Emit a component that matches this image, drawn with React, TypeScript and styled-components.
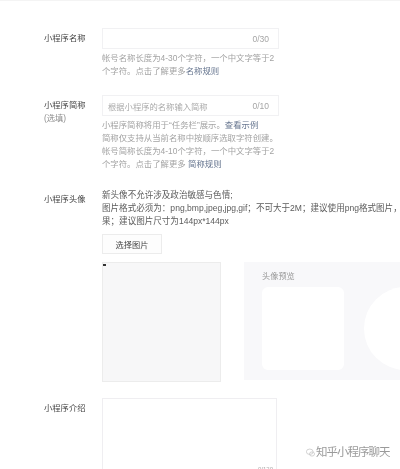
import React from "react";
import styled, { createGlobalStyle } from "styled-components";

const Global = createGlobalStyle`
  html, body { margin: 0; padding: 0; background: #fff; }
  body { font-family: "Liberation Sans", "Noto Sans CJK SC", sans-serif; }
`;

const Page = styled.div`
  position: relative;
  width: 400px;
  height: 469px;
  overflow: hidden;
  background: #fff;
  border-top: 1px solid #f4f4f4;
  box-sizing: border-box;
  padding-top: 27px;
  filter: blur(0.4px);
`;

const Row = styled.div<{ $mb: number }>`
  display: grid;
  grid-template-columns: 44px 58px 1fr;
  margin-bottom: ${(p) => p.$mb}px;
`;

const Label = styled.div<{ $pt: number }>`
  grid-column: 2;
  padding-top: ${(p) => p.$pt}px;
  font-size: 8.3px;
  line-height: 13px;
  color: #444;
`;

const Optional = styled.div`
  color: #8d8d8d;
`;

const Body = styled.div`
  grid-column: 3;
  min-width: 0;
`;

const InputBox = styled.div`
  box-sizing: border-box;
  width: 177px;
  height: 21px;
  border: 1px solid #f1f1f3;
  display: flex;
  align-items: center;
  justify-content: space-between;
  padding: 0 9px 0 5px;
  font-size: 8.3px;
  color: #aaa;
`;

const Counter = styled.span`
  color: #a5a5a5;
  font-size: 8.5px;
`;

const Hint = styled.div`
  margin-top: 3px;
  width: 176px;
  font-size: 8.4px;
  line-height: 13px;
  color: #a3a3a3;
  white-space: nowrap;
`;

const Link = styled.span`
  color: #66758f;
`;

const Notice = styled.div`
  font-size: 8.55px;
  line-height: 13px;
  color: #5c5c5c;
  white-space: nowrap;
`;

const PickButton = styled.div`
  box-sizing: border-box;
  width: 60px;
  height: 20px;
  margin-top: 6px;
  border: 1px solid #ececec;
  background: #fdfdfd;
  display: flex;
  align-items: center;
  justify-content: center;
  font-size: 8.2px;
  color: #444;
`;

const Stage = styled.div`
  display: flex;
  gap: 23px;
  margin-top: 8px;
`;

const Crop = styled.div`
  position: relative;
  box-sizing: border-box;
  width: 119px;
  height: 120px;
  border: 1px solid #ececec;
  background: #f7f7f8;
`;

const Handle = styled.i`
  position: absolute;
  left: 0;
  top: 1px;
  width: 3px;
  height: 2px;
  background: #333;
`;

const Preview = styled.div`
  position: relative;
  flex: 1;
  height: 118px;
  overflow: hidden;
  background: #f8f8fa;
  box-sizing: border-box;
  padding: 8px 0 0 18px;
`;

const PreviewTitle = styled.div`
  font-size: 8.2px;
  line-height: 13px;
  color: #999;
`;

const Square = styled.div`
  width: 82px;
  height: 83px;
  margin-top: 4px;
  background: #fff;
  border-radius: 6px;
`;

const Circle = styled.div`
  position: absolute;
  left: 120px;
  top: 25px;
  width: 83px;
  height: 83px;
  border-radius: 50%;
  background: #fff;
`;

const TextArea = styled.div`
  position: relative;
  box-sizing: border-box;
  width: 175px;
  height: 80px;
  border: 1px solid #efeef1;
  border-bottom: 0;
`;

const AreaCount = styled.span`
  position: absolute;
  right: 3px;
  top: 67px;
  font-size: 6px;
  color: #aaa;
`;

const Watermark = styled.div`
  position: absolute;
  left: 306px;
  top: 444px;
  display: flex;
  align-items: center;
  gap: 1px;
  height: 15px;
  font-size: 11.5px;
  line-height: 15px;
  letter-spacing: -1px;
  color: #9a9a9a;
  white-space: nowrap;
`;

const WatermarkIcon = styled.svg`
  width: 9px;
  height: 9px;
  flex: none;
`;

export default function App() {
  return (
    <Page>
      <Global />
      <Row $mb={17}>
        <Label $pt={4}>小程序名称</Label>
        <Body>
          <InputBox>
            <span />
            <Counter>0/30</Counter>
          </InputBox>
          <Hint>
            帐号名称长度为4-30个字符，一个中文字等于2
            <br />
            个字符。点击了解更多<Link>名称规则</Link>
          </Hint>
        </Body>
      </Row>
      <Row $mb={18}>
        <Label $pt={4}>
          小程序简称
          <Optional>(选填)</Optional>
        </Label>
        <Body>
          <InputBox>
            <span>根据小程序的名称输入简称</span>
            <Counter>0/10</Counter>
          </InputBox>
          <Hint>
            小程序简称将用于“任务栏”展示。<Link>查看示例</Link>
            <br />
            简称仅支持从当前名称中按顺序选取字符创建。
            <br />
            帐号简称长度为4-10个字符，一个中文字等于2
            <br />
            个字符。点击了解更多 <Link>简称规则</Link>
          </Hint>
        </Body>
      </Row>
      <Row $mb={16}>
        <Label $pt={4}>小程序头像</Label>
        <Body>
          <Notice>
            新头像不允许涉及政治敏感与色情;
            <br />
            图片格式必须为：png,bmp,jpeg,jpg,gif；不可大于2M；建议使用png格式图片，
            <br />
            果；建议图片尺寸为144px*144px
          </Notice>
          <PickButton>选择图片</PickButton>
          <Stage>
            <Crop>
              <Handle />
            </Crop>
            <Preview>
              <PreviewTitle>头像预览</PreviewTitle>
              <Square />
              <Circle />
            </Preview>
          </Stage>
        </Body>
      </Row>
      <Row $mb={0}>
        <Label $pt={4}>小程序介绍</Label>
        <Body>
          <TextArea>
            <AreaCount>0/120</AreaCount>
          </TextArea>
        </Body>
      </Row>
      <Watermark>
        <WatermarkIcon viewBox="0 0 12 12">
          <ellipse cx="5" cy="5" rx="4.5" ry="3.6" fill="none" stroke="#c4c4c4" strokeWidth="1" />
          <ellipse cx="8" cy="8" rx="3.4" ry="2.8" fill="none" stroke="#c4c4c4" strokeWidth="1" />
        </WatermarkIcon>
        知乎小程序聊天
      </Watermark>
    </Page>
  );
}
